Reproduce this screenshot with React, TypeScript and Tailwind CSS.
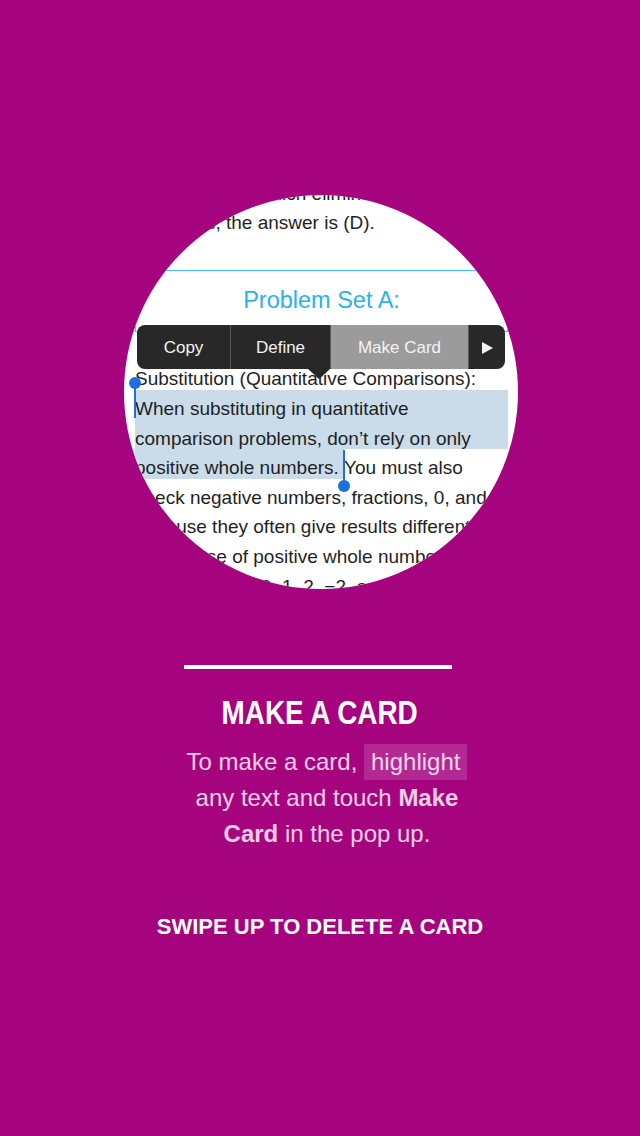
import React from "react";

const line = "h-[29.6px] pt-[8px] leading-[21.6px] whitespace-nowrap";
const sel = "bg-[#cadcea]";

export default function App() {
  return (
    <div className="w-[640px] h-[1136px] bg-[#a6037f] flex flex-col items-center pt-[195px] font-['Liberation_Sans',Arial,sans-serif] overflow-hidden">
      {/* Circle with document excerpt */}
      <div className="relative w-[394px] h-[394px] shrink-0 rounded-full bg-white overflow-hidden ml-[2px]">
        <div className="ml-[11px] mt-[-20.2px] w-[373px] text-[19px] text-[#1f1f1f]">
          <div className={`${line} pl-[34px]`}>is greater, which eliminates choice</div>
          <div className={`${line} pl-[16px]`}>choices, the answer is (D).</div>
          <div className="mt-[36px] h-[62px] border border-[#45bdf3] flex items-center justify-center text-[23.5px] text-[#2bb1ec]">
            Problem Set A:
          </div>
          <div className={`${line} mt-[28.4px]`}>Substitution (Quantitative Comparisons):</div>
          <div className={`${line} ${sel}`}>When substituting in quantitative</div>
          <div className={`${line} ${sel}`}>comparison problems, don’t rely on only</div>
          <div className="flex h-[29.6px] whitespace-pre">
            <span className={`pt-[8px] leading-[21.6px] ${sel}`}>positive whole numbers. </span>
            <span className="pt-[8px] leading-[21.6px]">You must also</span>
          </div>
          <div className={line}>check negative numbers, fractions, 0, and 1</div>
          <div className={line}>because they often give results different</div>
          <div className={line}>in the case of positive whole numbers.</div>
          <div className={line}>Try values like 0, 1, 2, −2, and ½.</div>
        </div>

        {/* selection handles */}
        <div className="absolute left-[10px] top-[188px] w-[2px] h-[35px] bg-[#1b6fde]" />
        <div className="absolute left-[5px] top-[182px] w-[12px] h-[12px] rounded-full bg-[#1b6fde]" />
        <div className="absolute left-[219px] top-[255px] w-[2px] h-[33px] bg-[#1b6fde]" />
        <div className="absolute left-[214px] top-[285px] w-[12px] h-[12px] rounded-full bg-[#1b6fde]" />

        {/* edit menu */}
        <div className="absolute left-[13px] top-[130px] w-[368px] h-[44px] rounded-[8px] overflow-hidden bg-[#282828] flex text-[17px] text-[#f2f2f2] pt-[1px]">
          <div className="w-[93px] flex items-center justify-center">Copy</div>
          <div className="w-px bg-[#575757] mt-[-1px]" />
          <div className="w-[99px] flex items-center justify-center">Define</div>
          <div className="w-px bg-[#575757] mt-[-1px]" />
          <div className="w-[137px] flex items-center justify-center bg-[#9b9b9b] text-[#f4f4f4] mt-[-1px] pt-[1px]">Make Card</div>
          <div className="w-px bg-[#575757] mt-[-1px]" />
          <div className="flex-1 flex items-center justify-center">
            <svg width="11" height="12" viewBox="0 0 11 12">
              <polygon points="0,0 11,6 0,12" fill="#f2f2f2" />
            </svg>
          </div>
        </div>
        <div className="absolute left-[184px] top-[174px] w-0 h-0 border-l-[11px] border-r-[11px] border-t-[10px] border-l-transparent border-r-transparent border-t-[#282828]" />
      </div>

      {/* divider bar */}
      <div className="mt-[76px] w-[268px] h-[4px] bg-white ml-[-4px] shrink-0" />

      {/* title */}
      <div className="mt-[25.5px] text-[34px] leading-[34px] font-bold text-white scale-x-[0.82] whitespace-nowrap">
        MAKE A CARD
      </div>

      {/* body */}
      <div className="mt-[15.2px] pl-[14px] text-[24px] leading-[36px] text-center text-white/80">
        To make a card,{" "}
        <span className="inline-block px-[7px] bg-white/15 leading-[36px]">highlight</span>
        <br />
        any text and touch <span className="font-bold">Make</span>
        <br />
        <span className="font-bold">Card</span> in the pop up.
      </div>

      {/* swipe */}
      <div className="mt-[64px] text-[22px] leading-[22px] font-bold text-white whitespace-nowrap">
        SWIPE UP TO DELETE A CARD
      </div>
    </div>
  );
}
